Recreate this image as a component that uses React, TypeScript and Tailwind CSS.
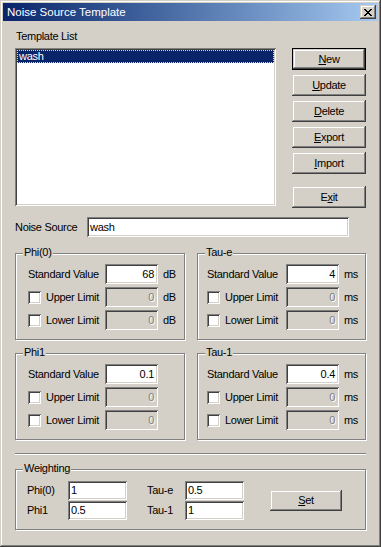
import React from "react";

// classic 3D edges
const sunken =
  "shadow-[inset_1px_1px_0_#808080,inset_-1px_-1px_0_#ffffff,inset_2px_2px_0_#404040,inset_-2px_-2px_0_#d4d0c8]";
const raised =
  "shadow-[inset_-1px_-1px_0_#404040,inset_1px_1px_0_#d4d0c8,inset_-2px_-2px_0_#808080,inset_2px_2px_0_#ffffff]";

const Btn: React.FC<{ children: React.ReactNode; isDefault?: boolean; className?: string }> = ({
  children,
  isDefault,
  className = "",
}) => (
  <div
    className={`flex items-center justify-center bg-[#d4d0c8] ${raised} ${
      isDefault ? "border border-black" : ""
    } ${className}`}
  >
    <span>{children}</span>
  </div>
);

const Box: React.FC<{
  value?: string;
  disabled?: boolean;
  right?: boolean;
  className?: string;
}> = ({ value, disabled, right, className = "" }) => (
  <div
    className={`flex items-center ${disabled ? "bg-[#d4d0c8]" : "bg-white"} ${sunken} ${
      right ? "justify-end pr-[4px]" : "pl-[3px]"
    } ${className}`}
  >
    <span className={disabled ? "text-[#808080] [text-shadow:1px_1px_0_#ffffff]" : ""}>{value}</span>
  </div>
);

const Group: React.FC<{ title: string; className?: string; children: React.ReactNode }> = ({
  title,
  className = "",
  children,
}) => (
  <div className={`relative border border-[#808080] shadow-[inset_1px_1px_0_#ffffff,1px_1px_0_#ffffff] ${className}`}>
    <span className="absolute left-[7px] top-[-8px] bg-[#d4d0c8] px-[1px] leading-[13px]">{title}</span>
    {children}
  </div>
);

type Row = { label: string; check?: boolean; value: string; disabled?: boolean };

const ParamGroup: React.FC<{
  title: string;
  rows: Row[];
  unit?: string;
  pad: string;
  labelW: string;
  className?: string;
}> = ({ title, rows, unit, pad, labelW, className = "" }) => (
  <Group title={title} className={`pt-[10px] pb-[9px] ${pad} ${className}`}>
    <div className="flex flex-col gap-[3px]">
      {rows.map((r) => (
        <div key={r.label} className="flex items-center h-[20px]">
          <div className={`flex items-center ${labelW}`}>
            {r.check && <div className={`w-[13px] h-[13px] bg-white mr-[5px] ${sunken}`} />}
            <span>{r.label}</span>
          </div>
          <Box value={r.value} disabled={r.disabled} right className="w-[53px] h-[20px]" />
          {unit && <span className="ml-[5px]">{unit}</span>}
        </div>
      ))}
    </div>
  </Group>
);

const limits = (std: string): Row[] => [
  { label: "Standard Value", value: std },
  { label: "Upper Limit", check: true, value: "0", disabled: true },
  { label: "Lower Limit", check: true, value: "0", disabled: true },
];

const App: React.FC = () => {
  return (
    <div
      className={`w-[381px] h-[547px] overflow-hidden bg-[#d4d0c8] p-[3px] text-black text-[11px] leading-[13px] tracking-[-0.3px] font-['Liberation_Sans',Arial,sans-serif] shadow-[inset_-1px_-1px_0_#404040,inset_1px_1px_0_#d4d0c8,inset_-2px_-2px_0_#808080,inset_2px_2px_0_#ffffff]`}
    >
      {/* title bar */}
      <div className="h-[18px] flex items-center justify-between bg-linear-to-r from-[#0a246a] to-[#a6caf0] pl-[4px] pr-[2px]">
        <span className="text-white text-[11.5px] tracking-normal">Noise Source Template</span>
        <div className={`w-[16px] h-[14px] flex items-center justify-center bg-[#d4d0c8] ${raised}`}>
          <svg width="8" height="7" viewBox="0 0 8 7" shapeRendering="crispEdges">
            <path
              d="M0 0h2v1H0zM6 0h2v1H6zM1 1h2v1H1zM5 1h2v1H5zM2 2h4v1H2zM3 3h2v1H3zM2 4h4v1H2zM1 5h2v1H1zM5 5h2v1H5zM0 6h2v1H0zM6 6h2v1H6z"
              fill="#000"
            />
          </svg>
        </div>
      </div>

      {/* body */}
      <div className="flex flex-col px-[12px] pt-[9px]">
        <div className="flex">
          <div className="flex flex-col w-[261px]">
            <div className="h-[13px] pl-[1px]">Template List</div>
            <div className={`mt-[5px] h-[158px] bg-white p-[2px] ${sunken}`}>
              <div className="h-[13px] flex items-center bg-[#0a246a] text-white border border-dotted border-[#e8dca8] pl-[1px]">
                wash
              </div>
            </div>
          </div>
          <div className="ml-[16px] pt-[18px] flex flex-col gap-[4px] w-[74px]">
            <Btn isDefault className="h-[22px]">
              <span className="underline">N</span>ew
            </Btn>
            <Btn className="h-[22px]">
              <span className="underline">U</span>pdate
            </Btn>
            <Btn className="h-[22px]">
              <span className="underline">D</span>elete
            </Btn>
            <Btn className="h-[22px]">
              <span className="underline">E</span>xport
            </Btn>
            <Btn className="h-[22px]">
              <span className="underline">I</span>mport
            </Btn>
            <Btn className="h-[22px] mt-[8px]">
              E<span className="underline">x</span>it
            </Btn>
          </div>
        </div>

        <div className="mt-[9px] flex items-center h-[20px]">
          <span className="w-[72px]">Noise Source</span>
          <Box value="wash" className="w-[262px] h-[20px]" />
        </div>

        <div className="mt-[16px] flex justify-between">
          <ParamGroup title="Phi(0)" rows={limits("68")} unit="dB" pad="pl-[12px]" labelW="w-[77px]" className="w-[170px]" />
          <ParamGroup title="Tau-e" rows={limits("4")} unit="ms" pad="pl-[9px]" labelW="w-[79px]" className="w-[169px]" />
        </div>

        <div className="mt-[13px] flex justify-between">
          <ParamGroup title="Phi1" rows={limits("0.1")} pad="pl-[12px]" labelW="w-[77px]" className="w-[170px]" />
          <ParamGroup title="Tau-1" rows={limits("0.4")} unit="ms" pad="pl-[9px]" labelW="w-[79px]" className="w-[169px]" />
        </div>

        <div className="mt-[13px] h-[2px] border-t border-[#808080] border-b border-b-white" />

        <Group title="Weighting" className="mt-[14px] pt-[11px] pb-[9px] pl-[11px]">
          <div className="flex items-center">
            <div className="grid grid-cols-[41px_59px] gap-y-[1px] items-center">
              <span>Phi(0)</span>
              <Box value="1" className="h-[19px]" />
              <span>Phi1</span>
              <Box value="0.5" className="h-[19px]" />
            </div>
            <div className="ml-[20px] grid grid-cols-[38px_59px] gap-y-[1px] items-center">
              <span>Tau-e</span>
              <Box value="0.5" className="h-[19px]" />
              <span>Tau-1</span>
              <Box value="1" className="h-[19px]" />
            </div>
            <Btn className="ml-[26px] w-[72px] h-[21px]">
              <span className="underline">S</span>et
            </Btn>
          </div>
        </Group>
      </div>
    </div>
  );
};

export default App;
